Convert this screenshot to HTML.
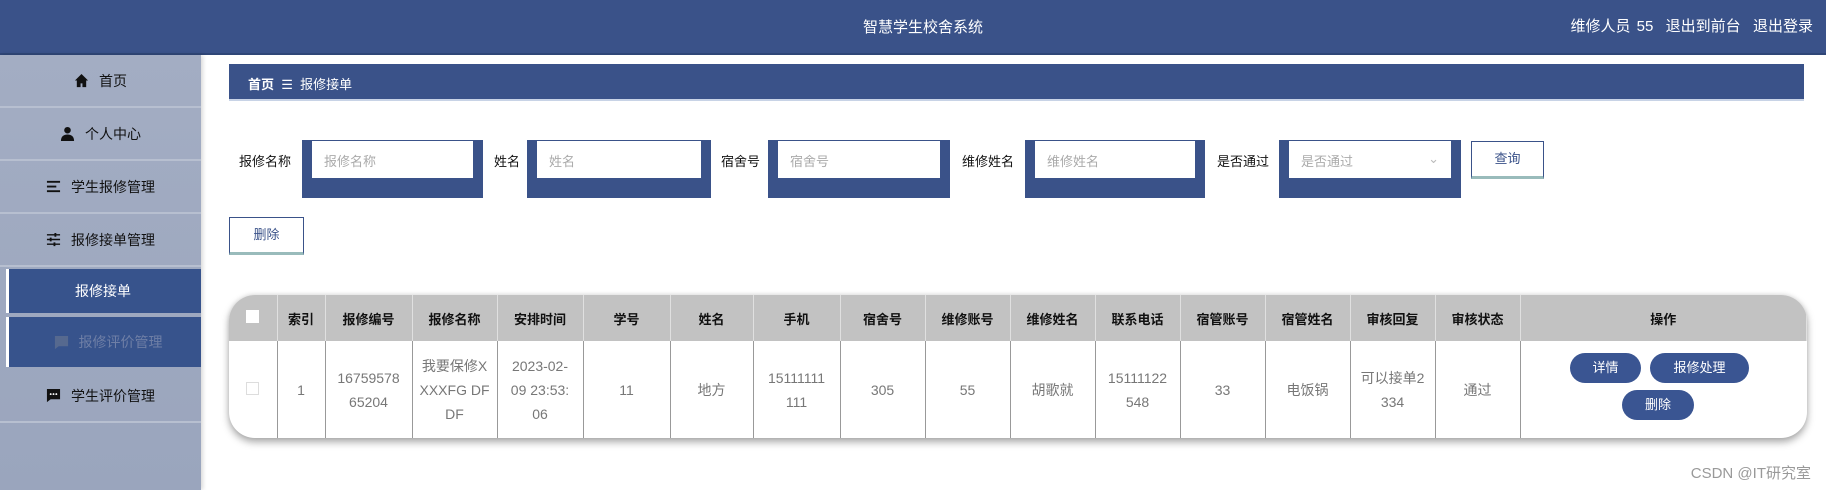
<!DOCTYPE html>
<html><head><meta charset="utf-8"><style>
*{margin:0;padding:0;box-sizing:border-box}
body{width:1826px;height:490px;overflow:hidden;background:#fff;font-family:"Liberation Sans","Noto Sans CJK SC",sans-serif;position:relative;color:#333}
.hdr{position:absolute;left:0;top:0;width:1826px;height:55px;background:#3a5289;color:#fff;border-bottom:2px solid #2f4677}
.hdr .t{position:absolute;left:0;width:1846px;text-align:center;top:16px;font-size:15px}
.hdr .r{position:absolute;right:13px;top:15px;font-size:15px;word-spacing:2px}
.side{position:absolute;left:0;top:55px;width:201px;height:435px;background:linear-gradient(#a3adc3,#9aa5bd);box-shadow:2px 0 4px rgba(0,0,0,.15)}
.it{position:absolute;left:0;width:201px;height:53px;border-bottom:2px solid #b7bfd0;font-size:14px;color:#111;display:flex;align-items:center;justify-content:center;gap:10px}
.it svg{width:15px;height:15px}
.act{background:#37538c;color:#fff;border-bottom:none;border-left:3px solid #fff;left:6px;width:195px;padding-left:6px}
.bc{position:absolute;left:229px;top:64px;width:1575px;height:37px;background:#3a5289;color:#fff;font-size:13px;padding:10px 19px;border-bottom:2px solid #c8d3e6}
.lbl{position:absolute;top:151px;font-size:13px;color:#111}
.box{position:absolute;top:140px;height:58px;background:#3a5289}
.box div{position:absolute;left:10px;top:1px;right:10px;height:37px;background:#fff;color:#aaa;font-size:13px;padding:10px 12px}
.btn{position:absolute;border:1px solid #3a5289;border-bottom:3px solid #9bb;background:#fff;font-size:13px;color:#3a5289;text-align:center}
.tbl{position:absolute;left:229px;top:295px;width:1578px;height:143px;border-radius:26px;overflow:hidden;box-shadow:0 4px 8px rgba(0,0,0,.35),0 -1px 4px rgba(0,0,0,.08)}
table{border-collapse:collapse;width:1578px;table-layout:fixed}
th{background:#c2c2c2;height:46px;font-size:13px;color:#111;border-right:1px solid #e0e0e0;font-weight:bold}
td{height:97px;font-size:14px;color:#777;text-align:center;border-right:1px solid #999;line-height:24px;padding:0 7px;word-break:break-all}
.pill{position:absolute;background:#3a5592;color:#fff;font-size:13px;border-radius:16px;text-align:center;line-height:30px;height:30px}
.cb{display:inline-block;width:13px;height:13px;background:#fff;border:1px solid #ddd}
</style></head><body>
<div class="hdr"><div class="t">智慧学生校舍系统</div><div class="r">维修人员 55 &nbsp;退出到前台 &nbsp;退出登录</div></div>
<div class="side">
<div class="it" style="top:0"><svg viewBox="0 0 16 16"><path d="M8 1L1 8h2v7h4v-4h2v4h4V8h2z" fill="#111"/></svg>首页</div>
<div class="it" style="top:53px"><svg viewBox="0 0 16 16"><circle cx="8" cy="4.5" r="3.5" fill="#111"/><path d="M1 16c0-5 3-7 7-7s7 2 7 7z" fill="#111"/></svg>个人中心</div>
<div class="it" style="top:106px"><svg viewBox="0 0 16 16"><path d="M1 3h14M1 8h10M1 13h14" stroke="#111" stroke-width="2"/></svg>学生报修管理</div>
<div class="it" style="top:159px"><svg viewBox="0 0 16 16"><path d="M1 3h14M1 8h14M1 13h14" stroke="#111" stroke-width="1.5"/><path d="M10 1v4M5 6v4M9 11v4" stroke="#111" stroke-width="2"/></svg>报修接单管理</div>
<div class="it act" style="top:214px;height:44px;justify-content:flex-start;padding-left:66px">报修接单</div>
<div class="it act" style="top:262px;height:50px;color:#6f7fa6"><svg viewBox="0 0 16 16"><path d="M1 1h14v11H5l-4 3z" fill="#56698f"/></svg>报修评价管理</div>
<div class="it" style="top:315px"><svg viewBox="0 0 16 16"><path d="M1 1h14v11H5l-4 3z" fill="#111"/><circle cx="5" cy="6.5" r="1" fill="#fff"/><circle cx="8" cy="6.5" r="1" fill="#fff"/><circle cx="11" cy="6.5" r="1" fill="#fff"/></svg>学生评价管理</div>
</div>
<div class="bc"><b>首页</b> &nbsp;☰&nbsp; 报修接单</div>
<div class="lbl" style="left:239px">报修名称</div><div class="box" style="left:302px;width:181px"><div>报修名称</div></div>
<div class="lbl" style="left:494px">姓名</div><div class="box" style="left:527px;width:184px"><div>姓名</div></div>
<div class="lbl" style="left:721px">宿舍号</div><div class="box" style="left:768px;width:182px"><div>宿舍号</div></div>
<div class="lbl" style="left:962px">维修姓名</div><div class="box" style="left:1025px;width:180px"><div>维修姓名</div></div>
<div class="lbl" style="left:1217px">是否通过</div><div class="box" style="left:1279px;width:182px"><div>是否通过<span style="float:right;color:#bbb">⌄</span></div></div>
<div class="btn" style="left:1471px;top:141px;width:73px;height:38px;line-height:33px">查询</div>
<div class="btn" style="left:229px;top:217px;width:75px;height:38px;line-height:33px">删除</div>
<div class="tbl"><table>
<colgroup><col style="width:48px"><col style="width:48px"><col style="width:87px"><col style="width:85px"><col style="width:86px"><col style="width:87px"><col style="width:83px"><col style="width:87px"><col style="width:85px"><col style="width:85px"><col style="width:85px"><col style="width:85px"><col style="width:85px"><col style="width:85px"><col style="width:85px"><col style="width:85px"><col></colgroup>
<tr><th><span class="cb" style="border:none"></span></th><th>索引</th><th>报修编号</th><th>报修名称</th><th>安排时间</th><th>学号</th><th>姓名</th><th>手机</th><th>宿舍号</th><th>维修账号</th><th>维修姓名</th><th>联系电话</th><th>宿管账号</th><th>宿管姓名</th><th>审核回复</th><th>审核状态</th><th>操作</th></tr>
<tr><td><span class="cb"></span></td><td>1</td><td>16759578<br>65204</td><td>我要保修X<br>XXXFG DF<br>DF</td><td>2023-02-<br>09 23:53:<br>06</td><td>11</td><td>地方</td><td>15111111<br>111</td><td>305</td><td>55</td><td>胡歌就</td><td>15111122<br>548</td><td>33</td><td>电饭锅</td><td>可以接单2<br>334</td><td>通过</td><td style="border:none"></td></tr>
</table></div>
<div class="pill" style="left:1570px;top:353px;width:71px">详情</div>
<div class="pill" style="left:1650px;top:353px;width:99px">报修处理</div>
<div class="pill" style="left:1622px;top:390px;width:72px">删除</div>
<div style="position:absolute;right:15px;top:462px;font-size:15px;color:#999">CSDN @IT研究室</div>
</body></html>
